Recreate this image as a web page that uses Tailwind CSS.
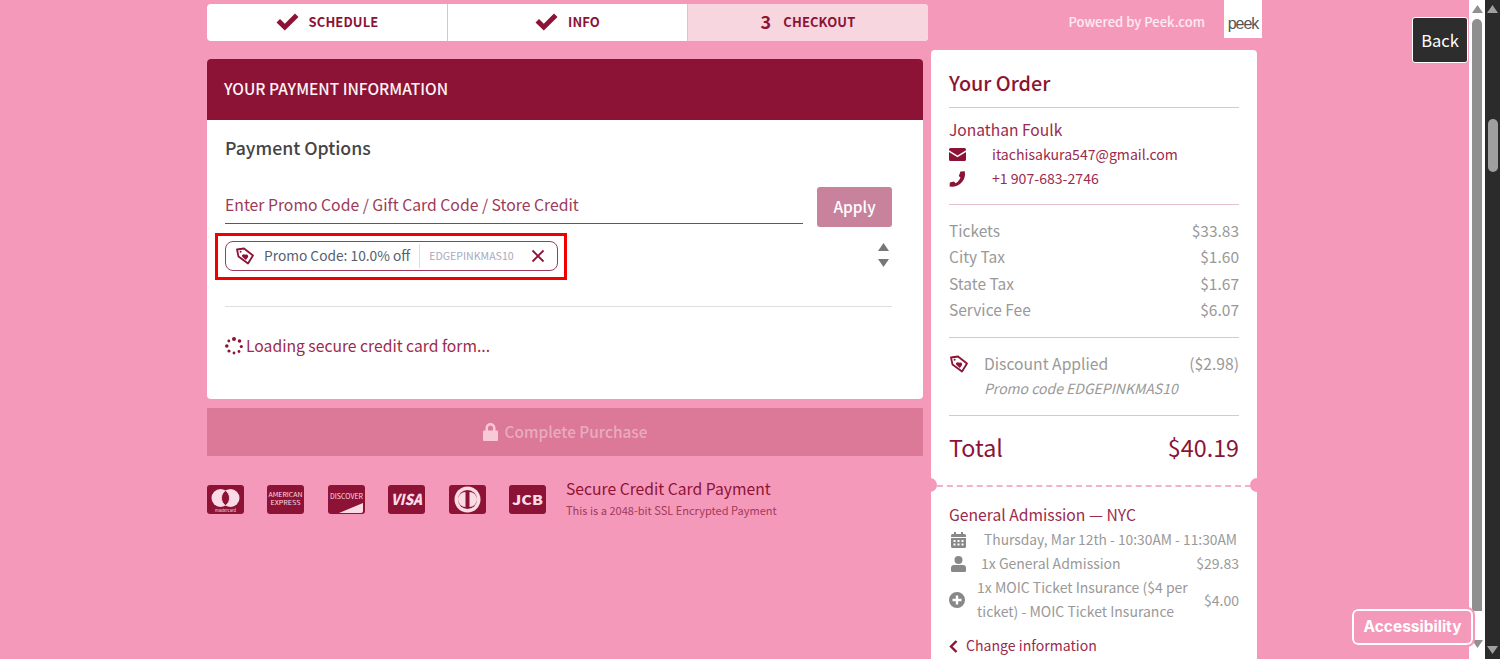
<!DOCTYPE html>
<html lang="en">
<head>
    <meta charset="UTF-8">
    <meta name="viewport" content="width=device-width, initial-scale=1.0">
    <title>Checkout</title>
    <script src="https://cdn.jsdelivr.net/npm/@tailwindcss/browser@4"></script>
</head>
<body class="h-[659px] overflow-hidden bg-[#f599ba] font-['Noto_Sans_CJK_SC','Noto_Sans',sans-serif] text-[#8c1336]">
    <div class="relative flex h-[659px] w-[1500px] overflow-hidden">
        <main class="flex w-[1469px] shrink-0 pl-[207px]">
            <!-- left column -->
            <section class="w-[721px] shrink-0 pt-[4px]">
                <div class="flex h-[37px] overflow-hidden rounded-[4px] bg-white text-[13px] leading-[37px] font-bold tracking-[0.1px]">
                    <div class="flex w-[241px] items-center justify-center gap-[10px] border-r border-[#ccc] pb-[2px]">
                        <svg class="h-[18px] w-[23px]" viewBox="0 0 23 18"><path d="M.5 9.500 4 6 8.800 10.800 19 .5 22.500 4 8.800 17.500z" fill="#8c1336"/></svg>
                        <span>SCHEDULE</span>
                    </div>
                    <div class="flex w-[240px] items-center justify-center gap-[10px] border-r border-[#ccc] pb-[2px]">
                        <svg class="h-[18px] w-[23px]" viewBox="0 0 23 18"><path d="M.5 9.500 4 6 8.800 10.800 19 .5 22.500 4 8.800 17.500z" fill="#8c1336"/></svg>
                        <span>INFO</span>
                    </div>
                    <div class="flex flex-1 items-center justify-center gap-[12px] bg-[#f7d6e0] pb-[2px]">
                        <span class="text-[18px]">3</span>
                        <span>CHECKOUT</span>
                    </div>
                </div>

                <div class="mt-[18px] w-[716px] overflow-hidden rounded-[4px] bg-white">
                    <div class="flex h-[61px] items-center bg-[#8c1336] px-[17px] pb-[2px] text-[15.500px] font-medium text-[#fdf3f6]">YOUR PAYMENT INFORMATION</div>
                    <div class="h-[279px] pr-[31px] pl-[18px]">
                        <h2 class="pt-[15px] text-[17.700px] leading-[25px] font-medium text-[#444]">Payment Options</h2>
                        <div class="mt-[27px] flex items-start">
                            <div class="mt-[3px] h-[34px] w-[578px] border-b border-[#9c3a58] text-[15.750px] leading-[30px] text-[#9c3a58]">Enter Promo Code / Gift Card Code / Store Credit</div>
                            <button class="ml-[14px] h-[40px] w-[75px] rounded-[3px] bg-[#c9829b] text-[15.500px] font-medium text-white">Apply</button>
                        </div>
                        <div class="flex items-start justify-between">
                            <div class="mt-[6px] ml-[-10px] h-[47px] w-[352px] border-[3px] border-[#f00000] pt-[5px] pl-[7px]">
                                <div class="flex h-[30px] w-[333px] items-center rounded-[8px] border border-[#9c3a58] pl-[9px]">
                                    <svg class="h-[20px] w-[20px] shrink-0" viewBox="0 0 20 20" fill="none"><path d="M2 3.500 9 2.500 18 9.500 13 17.500 3.500 10.500z" stroke="#8c1336" stroke-width="1.800" stroke-linejoin="round"/><circle cx="5.600" cy="5.800" r="1" fill="#8c1336"/><path d="M10.800 14 7.300 10.800C6 9 8.600 7.200 10.200 8.800 12.400 7.800 14 10 12.800 11.600z" fill="#8c1336"/></svg>
                                    <span class="ml-[9px] pb-[2px] text-[13.750px] leading-[20px] whitespace-nowrap text-[#555f70]">Promo Code: 10.0% off</span>
                                    <span class="ml-[9px] h-[24px] border-l border-[#dcdce4]"></span>
                                    <span class="ml-[9px] text-[10.600px] whitespace-nowrap text-[#a7a9c0]">EDGEPINKMAS10</span>
                                    <svg class="ml-[17px] h-[14px] w-[14px] shrink-0" viewBox="0 0 14 14"><path d="M1.500 1.500 12.500 12.500M12.500 1.500 1.500 12.500" stroke="#8c1336" stroke-width="1.800"/></svg>
                                </div>
                            </div>
                            <div class="mt-[16px] mr-[3px] flex flex-col gap-[8px]">
                                <svg class="h-[8px] w-[11px]" viewBox="0 0 11 8"><path d="M5.500 0 11 8H0z" fill="#777"/></svg>
                                <svg class="h-[8px] w-[11px]" viewBox="0 0 11 8"><path d="M0 0H11L5.500 8z" fill="#777"/></svg>
                            </div>
                        </div>
                        <div class="mt-[26px] border-t border-[#dddde2]"></div>
                        <div class="mt-[26px] flex h-[26px] items-center text-[15.700px] text-[#9c2a4c]">
                            <svg class="h-[18px] w-[18px]" viewBox="0 0 18 18" fill="#8c1336"><circle cx="9" cy="2" r="2"/><circle cx="14.500" cy="4" r="1.800"/><circle cx="16.300" cy="9.500" r="1.600"/><circle cx="14" cy="14.500" r="1.400"/><circle cx="9" cy="16" r="1.400"/><circle cx="4" cy="14" r="1.600"/><circle cx="1.800" cy="9" r="1.800"/><circle cx="3.800" cy="4" r="1.400"/></svg>
                            <span class="ml-[3px]">Loading secure credit card form...</span>
                        </div>
                    </div>
                </div>

                <button class="mt-[9px] flex h-[48px] w-[716px] items-center justify-center gap-[7px] bg-[#dc7898] text-[15.400px] font-medium text-white/40">
                    <svg class="h-[18px] w-[15px]" viewBox="0 0 15 18"><path d="M2.500 7.500V5a5 5 0 0 1 10 0v2.500H14a1 1 0 0 1 1 1V17a1 1 0 0 1-1 1H1a1 1 0 0 1-1-1V8.500a1 1 0 0 1 1-1zM5 7.500h5V5a2.500 2.500 0 0 0-5 0z" fill="#f8c9d9"/></svg>
                    Complete Purchase
                </button>

                <div class="mt-[29px] flex items-start">
                    <div class="flex w-[359px] justify-between pr-[20px]">
                        <svg class="h-[29px] w-[37px]" viewBox="0 0 37 29"><rect width="37" height="29" rx="3" fill="#8c1336"/><circle cx="13.500" cy="13" r="9" fill="#fbdbe5"/><circle cx="23.500" cy="13" r="9" fill="#fbdbe5"/><path d="M18.500 5.500a9 9 0 0 1 0 15 9 9 0 0 1 0-15z" fill="#8c1336" stroke="#fbdbe5" stroke-width=".8"/><text x="18.500" y="27" font-size="4" text-anchor="middle" fill="#fbdbe5">mastercard</text></svg>
                        <svg class="h-[29px] w-[37px]" viewBox="0 0 37 29"><rect width="37" height="29" rx="3" fill="#8c1336"/><text x="18.500" y="12" font-size="6" textLength="34" lengthAdjust="spacingAndGlyphs" text-anchor="middle" fill="#fbdbe5">AMERICAN</text><text x="18.500" y="20" font-size="6" textLength="30" lengthAdjust="spacingAndGlyphs" text-anchor="middle" fill="#fbdbe5">EXPRESS</text></svg>
                        <svg class="h-[29px] w-[37px]" viewBox="0 0 37 29"><rect width="37" height="29" rx="3" fill="#8c1336"/><text x="18.500" y="14" font-size="7" textLength="33" lengthAdjust="spacingAndGlyphs" text-anchor="middle" fill="#fbdbe5">DISCOVER</text><path d="M11 28 35 18V26a2 2 0 0 1-2 2z" fill="#fbdbe5"/></svg>
                        <svg class="h-[29px] w-[37px]" viewBox="0 0 37 29"><rect width="37" height="29" rx="3" fill="#8c1336"/><text x="18.500" y="20" font-size="15" font-weight="900" font-style="italic" textLength="31" lengthAdjust="spacingAndGlyphs" text-anchor="middle" fill="#fbdbe5">VISA</text></svg>
                        <svg class="h-[29px] w-[37px]" viewBox="0 0 37 29"><rect width="37" height="29" rx="3" fill="#8c1336"/><circle cx="18.500" cy="14.500" r="13" fill="#fbdbe5"/><circle cx="18.500" cy="14.500" r="9.500" fill="#8c1336"/><path d="M16.500 7v15a7.500 7.500 0 0 1 0-15zM20.500 7a7.500 7.500 0 0 1 0 15z" fill="#fbdbe5"/></svg>
                        <svg class="h-[29px] w-[37px]" viewBox="0 0 37 29"><rect width="37" height="29" rx="3" fill="#8c1336"/><text x="18.500" y="19.500" font-size="13" font-weight="900" textLength="31" lengthAdjust="spacingAndGlyphs" text-anchor="middle" fill="#fbdbe5">JCB</text></svg>
                    </div>
                    <div class="-mt-[8px]">
                        <div class="text-[15.700px] leading-[24px]">Secure Credit Card Payment</div>
                        <div class="text-[11.050px] leading-[18px] text-[#a13a5a]">This is a 2048-bit SSL Encrypted Payment</div>
                    </div>
                </div>
            </section>

            <!-- right column -->
            <aside class="ml-[3px] w-[331px] shrink-0">
                <div class="flex h-[38px] items-center justify-end">
                    <span class="pt-[6px] text-[13px] font-medium text-white/80">Powered by Peek.com</span>
                    <span class="ml-[19px] flex h-[38px] w-[38px] items-center justify-center bg-white pt-[10px] font-['Liberation_Sans',sans-serif] text-[16px] tracking-[-1px] text-[#555]">peek</span>
                </div>
                <div class="relative mt-[12px] h-[640px] w-[326px] rounded-t-[4px] bg-white px-[18px]">
                    <h2 class="pt-[18px] text-[19.750px] leading-[30px] font-medium">Your Order</h2>
                    <div class="mt-[9px] border-t border-[#e2c3cd]"></div>

                    <div class="mt-[9px] mb-[1px] text-[15.600px] leading-[24px] text-[#9c2a4c]">Jonathan Foulk</div>
                    <div class="flex h-[25px] items-center text-[14.100px] text-[#9c2a4c]">
                        <svg class="h-[13px] w-[17px]" viewBox="0 0 17 13"><path d="M1.500 0h14A1.500 1.500 0 0 1 17 1.500v.7L8.500 7.500 0 2.200v-.7A1.500 1.500 0 0 1 1.500 0zM0 4l8.500 5.300L17 4v7.500a1.500 1.500 0 0 1-1.500 1.500h-14A1.500 1.500 0 0 1 0 11.500z" fill="#8c1336"/></svg>
                        <span class="ml-[26px]">itachisakura547@gmail.com</span>
                    </div>
                    <div class="-mt-[1px] flex h-[25px] items-center text-[14.100px] text-[#9c2a4c]">
                        <svg class="h-[16px] w-[17px]" viewBox="0 0 17 16"><path d="M11.500.5 15.800.2 16 4C15.500 10.500 9.500 16 3 15.800L.6 15.500.8 11.500 5 10.500 6.500 12.300C9 11 10.500 9 11.500 6.500L9.800 5z" fill="#8c1336"/></svg>
                        <span class="ml-[26px]">+1 907-683-2746</span>
                    </div>
                    <div class="mt-[13px] border-t border-[#e2c3cd]"></div>

                    <div class="mt-[12px] text-[15.500px] leading-[26.250px] text-[#999]">
                        <div class="flex justify-between"><span>Tickets</span><span>$33.83</span></div>
                        <div class="flex justify-between"><span>City Tax</span><span>$1.60</span></div>
                        <div class="flex justify-between"><span>State Tax</span><span>$1.67</span></div>
                        <div class="flex justify-between"><span>Service Fee</span><span>$6.07</span></div>
                    </div>
                    <div class="mt-[15px] border-t border-[#e2c3cd]"></div>

                    <div class="mt-[13px] flex h-[26px] items-center justify-between text-[15.700px] text-[#999]">
                        <div class="flex items-center">
                            <svg class="h-[20px] w-[20px]" viewBox="0 0 20 20" fill="none"><path d="M2 3.500 9 2.500 18 9.500 13 17.500 3.500 10.500z" stroke="#8c1336" stroke-width="1.800" stroke-linejoin="round"/><circle cx="5.600" cy="5.800" r="1" fill="#8c1336"/><path d="M10.800 14 7.300 10.800C6 9 8.600 7.200 10.200 8.800 12.400 7.800 14 10 12.800 11.600z" fill="#8c1336"/></svg>
                            <span class="ml-[15px]">Discount Applied</span>
                        </div>
                        <span>($2.98)</span>
                    </div>
                    <div class="-mt-[1px] ml-[35px] text-[14px] leading-[24px] text-[#999] italic">Promo code EDGEPINKMAS10</div>
                    <div class="mt-[15px] border-t border-[#e2c3cd]"></div>

                    <div class="mt-[11px] flex h-[40px] items-center justify-between text-[23.300px]">
                        <span>Total</span><span>$40.19</span>
                    </div>

                    <div class="absolute top-[435px] right-[6px] left-[6px] border-t-2 border-dashed border-[#f2b3c9]"></div>
                    <div class="absolute top-[428px] left-[-6px] h-[14px] w-[12px] rounded-r-full bg-[#f599ba]"></div>
                    <div class="absolute top-[428px] right-[-7px] h-[14px] w-[14px] rounded-full bg-[#f599ba]"></div>

                    <div class="mt-[36px] text-[15.700px] leading-[24px] text-[#9c2a4c]">General Admission — NYC</div>
                    <div class="flex h-[25px] items-center text-[13.800px] text-[#999]">
                        <svg class="ml-[2px] h-[16px] w-[15px] shrink-0" viewBox="0 0 15 16" fill="#888"><path d="M3 0h2v2h5V0h2v2h1.500A1.500 1.500 0 0 1 15 3.500V5H0V3.500A1.500 1.500 0 0 1 1.500 2H3zM0 6h15v8.500a1.500 1.500 0 0 1-1.500 1.500h-12A1.500 1.500 0 0 1 0 14.500zM2.500 8v2h2V8zm4 0v2h2V8zm4 0v2h2V8zm-8 3.500v2h2v-2zm4 0v2h2v-2zm4 0v2h2v-2z" fill-rule="evenodd"/></svg>
                        <span class="ml-[18px] whitespace-nowrap">Thursday, Mar 12th - 10:30AM - 11:30AM</span>
                    </div>
                    <div class="flex h-[23px] items-center justify-between text-[14px] text-[#999]">
                        <div class="flex items-center">
                            <svg class="ml-[2px] h-[16px] w-[15px]" viewBox="0 0 15 16" fill="#888"><circle cx="7.500" cy="4" r="4"/><path d="M3 9h9a3 3 0 0 1 3 3v2.500a1.500 1.500 0 0 1-1.500 1.500h-12A1.500 1.500 0 0 1 0 14.500V12a3 3 0 0 1 3-3z"/></svg>
                            <span class="ml-[15px]">1x General Admission</span>
                        </div>
                        <span>$29.83</span>
                    </div>
                    <div class="flex h-[49px] items-center justify-between text-[14px] leading-[24px] text-[#999]">
                        <div class="flex items-center">
                            <svg class="h-[16px] w-[16px] shrink-0" viewBox="0 0 16 16"><path d="M8 0a8 8 0 1 1 0 16A8 8 0 0 1 8 0zM6.800 3.500v3.300H3.500v2.400h3.300v3.300h2.400V9.200h3.300V6.800H9.200V3.500z" fill="#888" fill-rule="evenodd"/></svg>
                            <span class="ml-[12px] w-[222px] pb-[2px]">1x MOIC Ticket Insurance ($4 per ticket) - MOIC Ticket Insurance</span>
                        </div>
                        <span>$4.00</span>
                    </div>
                    <div class="mt-[10px] flex h-[24px] items-center text-[14.100px] text-[#9c2a4c]">
                        <svg class="h-[13px] w-[9px]" viewBox="0 0 9 13"><path d="M7.500 1 2 6.500 7.500 12" fill="none" stroke="#8c1336" stroke-width="2.400"/></svg>
                        <span class="ml-[8px]">Change information</span>
                    </div>
                </div>
            </aside>
        </main>

        <!-- scrollbars -->
        <div class="flex w-[16px] shrink-0 flex-col items-center bg-white pt-[5px]">
            <svg class="h-[8px] w-[11px]" viewBox="0 0 11 8"><path d="M5.500 0 11 8H0z" fill="#909090"/></svg>
            <div class="mt-[6px] h-[592px] w-[10px] rounded-t-full bg-[#8f8f8f]"></div>
            <svg class="mt-[29px] h-[8px] w-[11px]" viewBox="0 0 11 8"><path d="M0 0H11L5.500 8z" fill="#909090"/></svg>
        </div>
        <div class="flex w-[15px] shrink-0 flex-col items-center bg-[#2b2b2b] pt-[5px]">
            <svg class="h-[8px] w-[11px]" viewBox="0 0 11 8"><path d="M5.500 0 11 8H0z" fill="#a0a0a0"/></svg>
            <div class="mt-[106px] h-[53px] w-[10px] rounded-full bg-[#9f9f9f]"></div>
            <svg class="mt-[474px] h-[8px] w-[11px]" viewBox="0 0 11 8"><path d="M0 0H11L5.500 8z" fill="#a0a0a0"/></svg>
        </div>

        <!-- overlays -->
        <button class="absolute top-[17px] left-[1412px] h-[46px] w-[56px] rounded-[3px] border border-white bg-[#2d2d2d] text-[16.500px] text-white">Back</button>
        <div class="absolute top-[609px] left-[1352px] flex h-[36px] w-[121px] items-center justify-center rounded-[6px] border-[2px] border-white bg-[#f599ba] font-['Inter',sans-serif] text-[15.500px] font-bold text-white outline-2 outline-[#f599ba]">Accessibility</div>
    </div>
</body>
</html>
